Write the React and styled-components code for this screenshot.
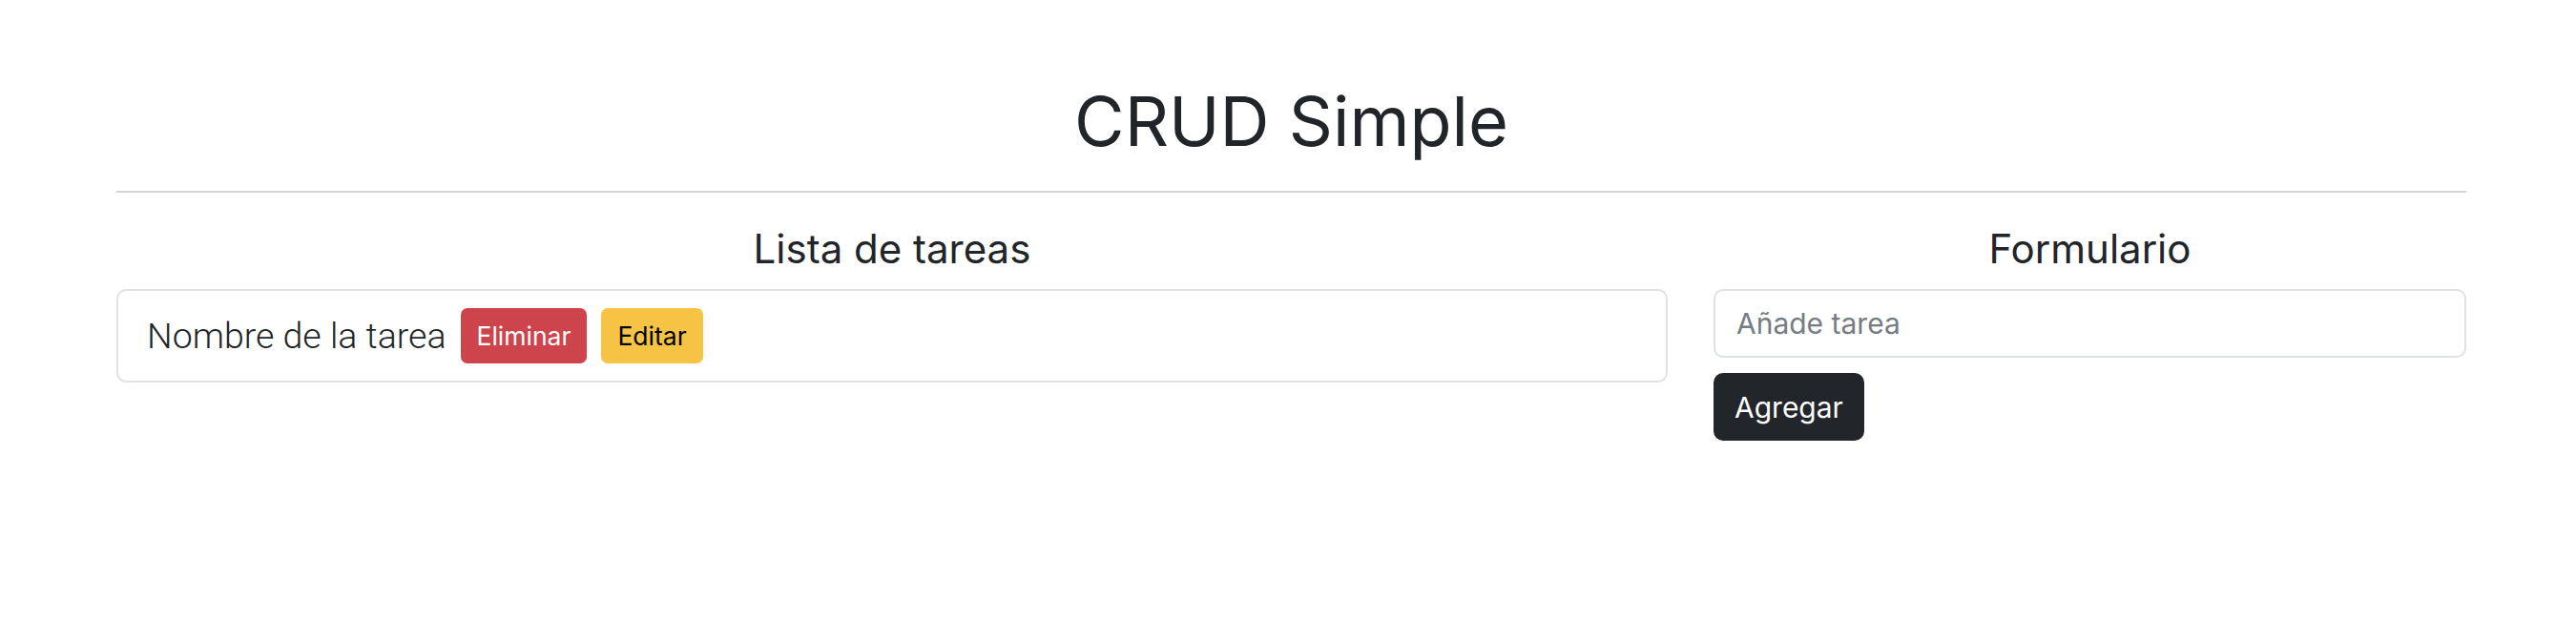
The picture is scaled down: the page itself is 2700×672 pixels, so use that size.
import React, { useState } from 'react';
import styled, { createGlobalStyle } from 'styled-components';

const GlobalStyle = createGlobalStyle`
  * { box-sizing: border-box; }
  body {
    margin: 0;
    background: #fff;
    color: #212529;
    font-family: Inter, "Noto Sans", "Liberation Sans", sans-serif;
  }
`;

export default function App() {
  const [tarea, setTarea] = useState('');
  return (
    <Page>
      <GlobalStyle />
      <Title>CRUD Simple</Title>
      <Divider />
      <Row>
        <Column>
          <Heading>Lista de tareas</Heading>
          <List>
            <Item>
              <Lead>Nombre de la tarea</Lead>
              <SmallButton variant="danger" spaced>Eliminar</SmallButton>
              <SmallButton variant="warning">Editar</SmallButton>
            </Item>
          </List>
        </Column>
        <Column>
          <Heading>Formulario</Heading>
          <Form onSubmit={(e) => e.preventDefault()}>
            <Input
              type="text"
              placeholder="Añade tarea"
              value={tarea}
              onChange={(e) => setTarea(e.target.value)}
            />
            <DarkButton type="submit">Agregar</DarkButton>
          </Form>
        </Column>
      </Row>
    </Page>
  );
}

const Page = styled.div`
  padding: 82px 115px 0 122px;
`;

const Title = styled.h1`
  margin: 0;
  text-align: center;
  font-size: 72px;
  font-weight: 400;
  line-height: 90px;
`;

const Divider = styled.hr`
  margin: 28px 0 30px;
  border: none;
  border-top: 2px solid #d2d3d4;
`;

const Row = styled.div`
  display: grid;
  grid-template-columns: calc((100% + 48px) * 2 / 3 - 48px) 1fr;
  column-gap: 48px;
  align-items: start;
`;

const Column = styled.div`
  display: flex;
  flex-direction: column;
`;

const Heading = styled.h4`
  margin: 4px 0 17px;
  text-align: center;
  font-size: 42px;
  font-weight: 400;
  line-height: 50px;
`;

const List = styled.ul`
  margin: 0;
  padding: 0;
  list-style: none;
`;

const Item = styled.li`
  display: flex;
  align-items: center;
  padding: 18px 30px;
  border: 2px solid #e0e2e4;
  border-radius: 10px;
`;

const Lead = styled.span`
  font-family: Roboto, Inter, sans-serif;
  font-size: 37.5px;
  font-weight: 300;
  line-height: 56px;
`;

const colors = {
  danger: { bg: '#cd444d', fg: '#fff' },
  warning: { bg: '#f6c344', fg: '#000' },
};

const SmallButton = styled.button`
  height: 58px;
  margin: 0 ${({ spaced }) => (spaced ? '15px' : '0')};
  padding: 0 17px;
  border: none;
  border-radius: 7px;
  background: ${({ variant }) => colors[variant].bg};
  color: ${({ variant }) => colors[variant].fg};
  font-family: inherit;
  font-size: 26.5px;
  font-weight: 400;
  cursor: pointer;
`;

const Form = styled.form`
  display: flex;
  flex-direction: column;
  align-items: flex-start;
  gap: 16px;
`;

const Input = styled.input`
  width: 100%;
  height: 72px;
  padding: 0 22px;
  border: 2px solid #dee2e6;
  border-radius: 10px;
  font-family: inherit;
  font-size: 30px;
  color: #212529;
  &::placeholder {
    color: #767c83;
  }
  &:focus {
    outline: none;
  }
`;

const DarkButton = styled.button`
  height: 71px;
  padding: 0 22px;
  border: none;
  border-radius: 10px;
  background: #222529;
  color: #fff;
  font-family: inherit;
  font-size: 30px;
  font-weight: 400;
  cursor: pointer;
`;
